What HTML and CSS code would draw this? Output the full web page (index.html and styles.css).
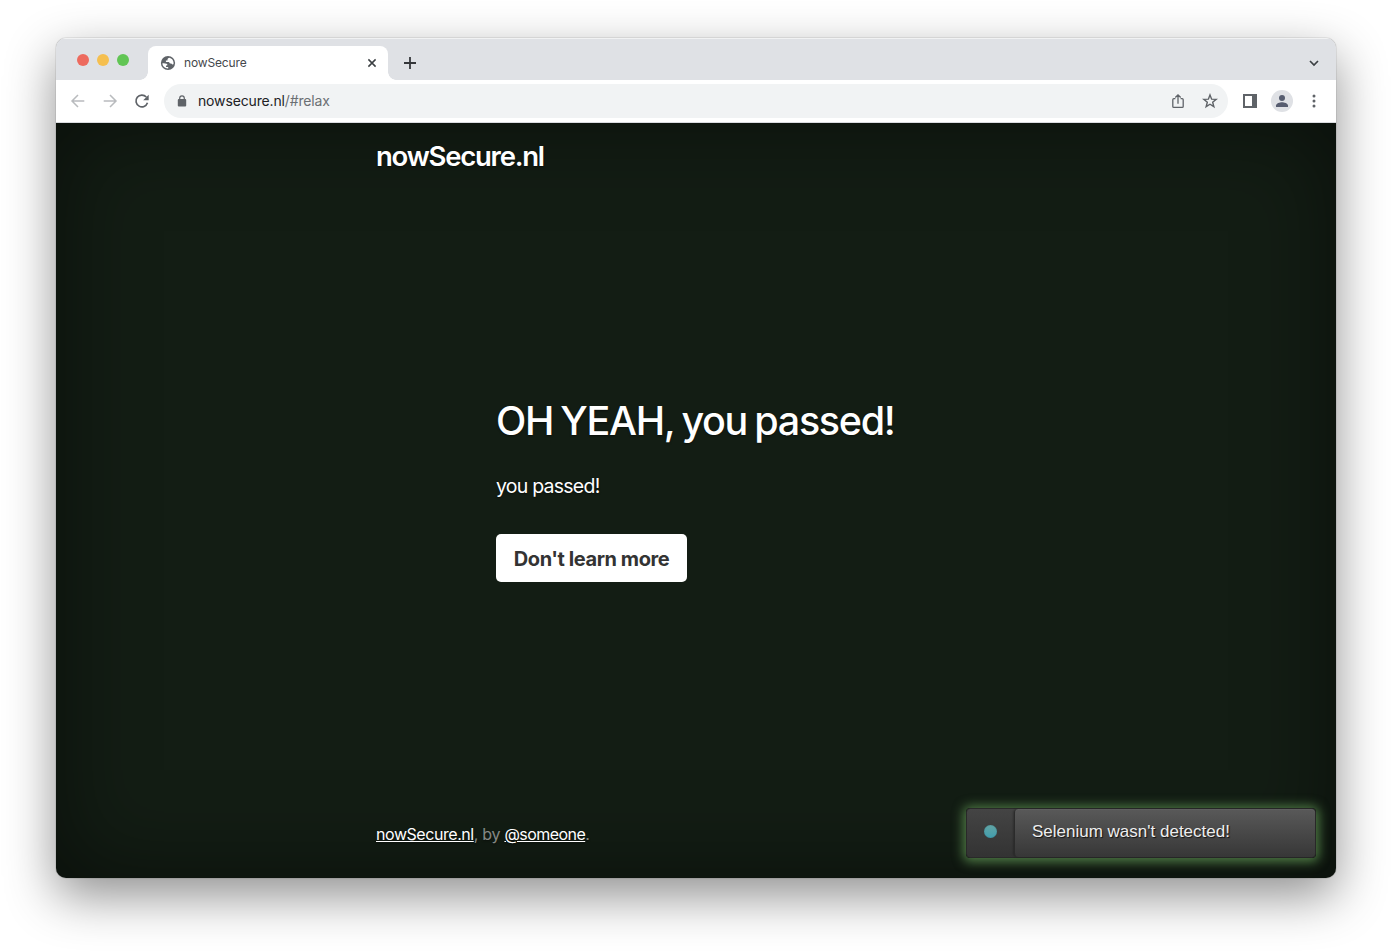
FILE: index.html
```html
<!DOCTYPE html>
<html lang="en">
<head>
<meta charset="utf-8">
<title>nowSecure</title>
<link rel="stylesheet" href="styles.css">
</head>
<body>
<div class="window">
  <div class="tabstrip">
    <div class="lights"><i class="red"></i><i class="yellow"></i><i class="green"></i></div>
    <div class="tab">
      <svg class="globe" width="16" height="16" viewBox="0 0 16 16"><circle cx="8" cy="8" r="7.100" fill="#5f6368"/><path fill="#fff" d="M9.400 2.700C8.200 3 7.500 3.600 7.500 4.400v1H5.900V7h3.200c.2 1.100.9 1.600 2 1.600.8 0 .9.800 1.400 1 .6.1 1.100-.5 1.100-1.600 0-2.600-1.800-4.800-4.200-5.300zM2.400 8.300c1.600-.2 3.100 0 4.100.4 1 .4 1 1.100.6 1.900H6v1.300h2.200v1.500C5 13.500 2.600 11.700 2.400 8.300z"/></svg>
      <span class="tab-title">nowSecure</span>
      <svg class="close" width="10" height="10" viewBox="0 0 10 10"><path d="M1.400 1.400l7.200 7.200M8.600 1.400l-7.200 7.200" stroke="#3c4043" stroke-width="1.500"/></svg>
    </div>
    <svg class="plus" width="14" height="14" viewBox="0 0 14 14"><path d="M7 1v12M1 7h12" stroke="#35373a" stroke-width="1.800"/></svg>
    <svg class="chevron" width="12" height="12" viewBox="0 0 12 12"><path d="M2 4l4 4 4-4" fill="none" stroke="#3c4043" stroke-width="1.700"/></svg>
  </div>
  <div class="toolbar">
    <svg class="nav" width="16" height="16" viewBox="0 0 16 16"><path d="M14.300 8H2.300M8 2L2 8l6 6" fill="none" stroke="#b9bbbe" stroke-width="1.500"/></svg>
    <svg class="nav" width="16" height="16" viewBox="0 0 16 16"><path d="M1.700 8h12M8 2l6 6-6 6" fill="none" stroke="#b9bbbe" stroke-width="1.500"/></svg>
    <svg class="nav" width="16" height="16" viewBox="0 0 16 16"><path d="M13.500 9.800A5.900 5.900 0 1 1 12.300 4" fill="none" stroke="#5f6368" stroke-width="1.700"/><path d="M14.700 1.700v5.500H9.200z" fill="#5f6368"/></svg>
    <div class="omnibox">
      <svg width="10" height="12" viewBox="0 0 10 12"><path d="M2.700 5V3.200a2.300 2.300 0 0 1 4.600 0V5" fill="none" stroke="#5f6368" stroke-width="1.200"/><rect x=".8" y="4" width="8.400" height="7.400" rx="1" fill="#5f6368"/></svg>
      <span class="url">nowsecure.nl<span class="path">/#relax</span></span>
      <svg class="share" width="16" height="16" viewBox="0 0 16 16"><path d="M5.400 5.700H3.800a1 1 0 0 0-1 1v6.700a1 1 0 0 0 1 1h8.400a1 1 0 0 0 1-1V6.700a1 1 0 0 0-1-1h-1.600M8 10.800V2M5.300 4.500L8 1.800l2.700 2.700" fill="none" stroke="#5f6368" stroke-width="1.300"/></svg>
      <svg class="star" width="16" height="16" viewBox="0 0 16 16"><path d="M8 1.900l1.650 4.250 4.550.25-3.520 2.900 1.170 4.400L8 11.250 4.150 13.700l1.170-4.400L1.800 6.400l4.550-.25z" fill="none" stroke="#5f6368" stroke-width="1.400"/></svg>
    </div>
    <svg class="panel" width="14" height="14" viewBox="0 0 14 14"><path fill="#5f6368" fill-rule="evenodd" d="M0 0h14v14H0zM2 2v10h7V2z"/></svg>
    <div class="avatar"><svg width="14" height="14" viewBox="0 0 14 14"><circle cx="7" cy="3.900" r="3" fill="#575d70"/><path d="M1 13v-1.400c0-2.200 4-3.400 6-3.400s6 1.200 6 3.400V13z" fill="#575d70"/></svg></div>
    <svg class="more" width="4" height="14" viewBox="0 0 4 14"><g fill="#5f6368"><circle cx="2" cy="2" r="1.500"/><circle cx="2" cy="7" r="1.500"/><circle cx="2" cy="12" r="1.500"/></g></svg>
  </div>
  <div class="page">
    <div class="cover">
      <h3 class="brand">nowSecure.nl</h3>
      <main>
        <h1>OH YEAH, you passed!</h1>
        <p class="lead">you passed!</p>
        <a class="btn"><span>Don't learn more</span></a>
      </main>
      <footer><a class="site">nowSecure.nl</a><span class="by">, by </span><a class="author">@someone</a>.</footer>
    </div>
    <div class="toast">
      <div class="toast-icon"><i></i></div>
      <div class="toast-body">Selenium wasn't detected!</div>
    </div>
  </div>
</div>
</body>
</html>
```
FILE: styles.css
```css
* { box-sizing: border-box; }
body { margin: 0; padding: 38px 56px; height: 952px; overflow: hidden; background: #fff; font-family: Inter, sans-serif; }
svg { display: block; flex: none; }
.window {
  width: 1280px; height: 840px; border-radius: 10px; overflow: hidden;
  display: flex; flex-direction: column; background: #fff;
  box-shadow: 0 0 1px rgba(0,0,0,.7), 0 18px 50px rgba(0,0,0,.44);
}
.tabstrip { height: 42px; background: #dfe1e5; display: flex; align-items: flex-start; box-shadow: inset 0 1px #f1f2f3; }
.lights { display: flex; gap: 7.500px; padding: 15.500px 0 0 20.500px; width: 92px; }
.lights i { width: 12.500px; height: 12.500px; border-radius: 50%; }
.red { background: #ed6a5e; }
.yellow { background: #f5bf4f; }
.green { background: #61c554; }
.tab {
  position: relative; width: 240px; height: 34px; margin-top: 8px; padding: 0 11px 0 12px;
  background: #fff; border-radius: 8px 8px 0 0; display: flex; align-items: center;
}
.tab::before, .tab::after { content: ""; position: absolute; bottom: 0; width: 8px; height: 8px; }
.tab::before { left: -8px; background: radial-gradient(circle at 0 0, transparent 7.500px, #fff 8px); }
.tab::after { right: -8px; background: radial-gradient(circle at 100% 0, transparent 7.500px, #fff 8px); }
.tab-title { margin-left: 8px; padding-bottom: 2px; font-size: 12px; letter-spacing: -.15px; color: #45484c; }
.close { margin-left: auto; }
.plus { margin: 18px 0 0 15px; }
.chevron { margin: 19px 16px 0 auto; }
.toolbar { height: 43px; border-bottom: 1px solid #dadce0; display: flex; align-items: center; padding-left: 14px; }
.nav { margin-right: 16px; }
.omnibox { width: 1064px; height: 34px; margin-left: -2px; border-radius: 17px; background: #f1f3f4; display: flex; align-items: center; padding: 0 10px 0 13px; }
.url { margin-left: 11px; padding-bottom: 2px; font-size: 14px; letter-spacing: -.15px; color: #202124; white-space: nowrap; }
.path { color: #6b6f73; }
.share { margin-left: auto; }
.star { margin-left: 16px; }
.panel { margin-left: 15px; }
.avatar { width: 22px; height: 22px; margin-left: 14px; border-radius: 50%; background: #dfe1e5; display: flex; align-items: center; justify-content: center; }
.more { margin-left: 19px; }
.page { position: relative; flex: 1; background: #131d14; color: #fff; box-shadow: inset 0 0 90px rgba(0,0,0,.5); }
.cover { width: 672px; height: 100%; margin: 0 auto; padding: 16px; display: flex; flex-direction: column; text-shadow: 0 1px 2px rgba(0,0,0,.5); }
h1, h3, p { margin: 0; }
.brand { font-size: 27.500px; font-weight: 560; line-height: 34px; letter-spacing: -1.240px; }
main { margin: auto 0; padding: 0 0 16px 120px; white-space: nowrap; }
h1 { font-size: 39.500px; font-weight: 500; line-height: 48px; letter-spacing: -1.320px; word-spacing: -1.900px; margin-bottom: 26px; }
.lead { font-size: 19.500px; font-weight: 400; line-height: 30px; letter-spacing: -.76px; margin-bottom: 33px; }
.btn { display: flex; align-items: center; justify-content: center; width: 191px; height: 48px; padding-top: 1px; border-radius: 5px; background: #fff; color: #333; font-size: 20px; font-weight: 700; letter-spacing: -.43px; text-shadow: none; }
footer { height: 24px; margin-bottom: 16px; font-size: 16px; line-height: 24px; letter-spacing: -.44px; color: rgba(255,255,255,.5); white-space: pre; }
footer a { color: #fff; text-decoration: underline; }
.author { letter-spacing: -.55px; }
.by { letter-spacing: -.3px; }
.toast {
  position: absolute; right: 20px; bottom: 20px; width: 350px; height: 50px; display: flex;
  border: 1px solid #292929; border-radius: 4px; background: linear-gradient(#444, #333);
  box-shadow: 0 1px 11px 3px #4f7a45;
}
.toast-icon { width: 47px; padding-bottom: 3px; display: flex; align-items: center; justify-content: center; }
.toast-icon i { width: 13px; height: 13px; border-radius: 50%; background: linear-gradient(#63a4a4, #419eae); box-shadow: inset 0 0 1px #347582; }
.toast-body { flex: 1; border-left: 1px solid #2b2b2b; border-radius: 4px; background: linear-gradient(#595959, #373737); box-shadow: inset 0 1px rgba(255,255,255,.04), -1px 0 2px rgba(0,0,0,.25); padding: 11px 17px; font: 17px/23px "Liberation Sans", Arial, sans-serif; color: #eee; text-shadow: 1px 1px 1px #111; }
```
